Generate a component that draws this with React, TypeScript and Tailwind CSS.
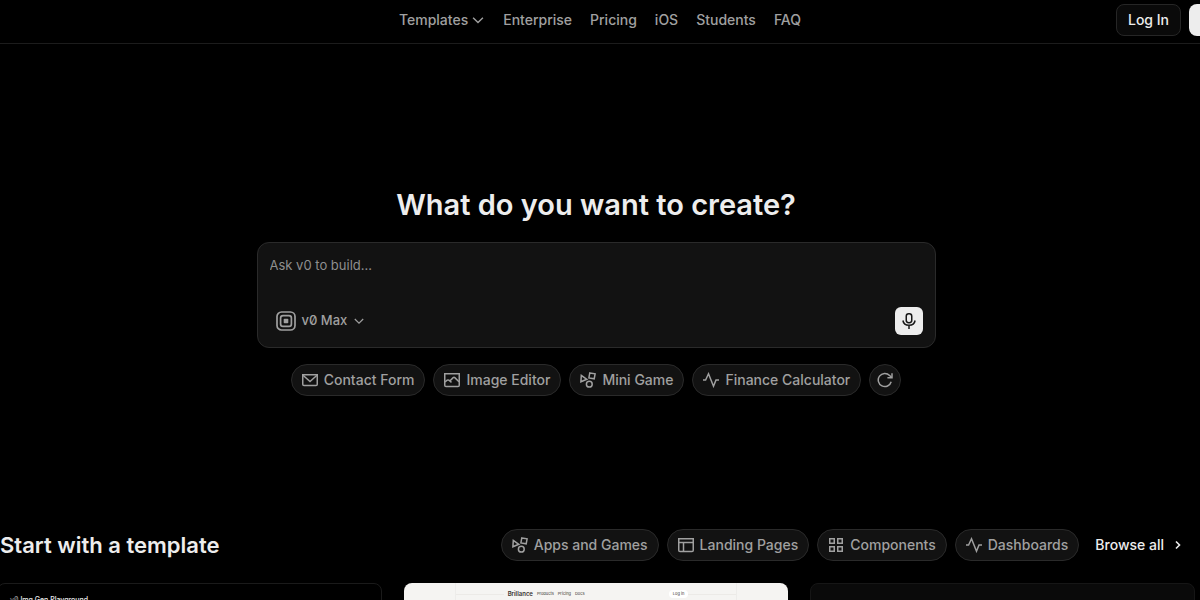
import React, { useState } from 'react';

type IconProps = { className?: string };

const ChevronDownIcon: React.FC<IconProps> = ({ className }) => (
    <svg viewBox="0 0 12 12" fill="none" stroke="currentColor" strokeWidth="1.2" className={className} aria-hidden="true">
        <path d="M1.8 4 6 8.2 10.2 4" />
    </svg>
);

const ChevronRightIcon: React.FC<IconProps> = ({ className }) => (
    <svg viewBox="0 0 12 12" fill="none" stroke="currentColor" strokeWidth="1.6" className={className} aria-hidden="true">
        <path d="M4 2.500 7.500 6 4 9.500" />
    </svg>
);

const ModelIcon: React.FC<IconProps> = ({ className }) => (
    <svg viewBox="0 0 20 20" fill="none" stroke="currentColor" strokeWidth="1.7" className={className} aria-hidden="true">
        <rect x="1" y="1" width="18" height="18" rx="4.5" />
        <rect x="4.6" y="4.6" width="10.8" height="10.8" rx="2.4" />
        <rect x="7.7" y="7.7" width="4.6" height="4.6" rx="0.8" fill="currentColor" stroke="none" />
    </svg>
);

const MicIcon: React.FC<IconProps> = ({ className }) => (
    <svg viewBox="0 0 16 16" fill="none" stroke="currentColor" strokeWidth="1.5" className={className} aria-hidden="true">
        <rect x="5.25" y="0.75" width="5.5" height="9" rx="2.4" />
        <path d="M1.9 7.5c.5 2.9 3 4.8 6.1 4.8s5.6-1.9 6.1-4.8M8 12.3V16" />
    </svg>
);

const MailIcon: React.FC<IconProps> = ({ className }) => (
    <svg viewBox="0 0 16 16" fill="none" stroke="currentColor" strokeWidth="1.5" className={className} aria-hidden="true">
        <path d="M.75 2.75h14.5v9.5a1.25 1.25 0 0 1-1.25 1.25H2a1.25 1.25 0 0 1-1.25-1.25z" />
        <path d="M1 3.2 8 9.5l7-6.3" />
    </svg>
);

const ImageIcon: React.FC<IconProps> = ({ className }) => (
    <svg viewBox="0 0 16 16" fill="none" stroke="currentColor" strokeWidth="1.5" className={className} aria-hidden="true">
        <path d="M.75 1.75h14.5v11.5a1.25 1.25 0 0 1-1.25 1.25H2a1.25 1.25 0 0 1-1.25-1.25z" />
        <path d="M1 10 3.2 8.2Q4 7.6 4.800 8.200L7.500 10.300M5.800 9 9.200 5.600Q10 4.900 10.800 5.600L15 9.800" />
    </svg>
);

const ShapesIcon: React.FC<IconProps> = ({ className }) => (
    <svg viewBox="0 0 16 16" fill="none" stroke="currentColor" strokeWidth="1.5" className={className} aria-hidden="true">
        <path d="M1.3 3.4 6.8 7.300 .9 9.800z" />
        <path d="M9.800 .9l5.300 .9-.9 5-5.300-.9z" />
        <circle cx="9.3" cy="12.2" r="2.9" />
    </svg>
);

const PulseIcon: React.FC<IconProps> = ({ className }) => (
    <svg viewBox="0 0 16 16" fill="none" stroke="currentColor" strokeWidth="1.5" className={className} aria-hidden="true">
        <path d="M0 8h2.6L5.5 1.8 10.5 14.2 13 8H16" />
    </svg>
);

const RefreshIcon: React.FC<IconProps> = ({ className }) => (
    <svg viewBox="0 0 16 16" fill="none" stroke="currentColor" strokeWidth="1.5" className={className} aria-hidden="true">
        <path d="M14.2 9.8A6.6 6.6 0 1 1 12.6 3.4L14.7 5.5" />
        <path d="M15 1.2V5.75H10.4" />
    </svg>
);

const LayoutIcon: React.FC<IconProps> = ({ className }) => (
    <svg viewBox="0 0 16 16" fill="none" stroke="currentColor" strokeWidth="1.5" className={className} aria-hidden="true">
        <path d="M.75 1.75h14.5v11.5a1.25 1.25 0 0 1-1.25 1.25H2a1.25 1.25 0 0 1-1.25-1.25zM.75 5.5h14.5M5.5 5.5v9" />
    </svg>
);

const GridIcon: React.FC<IconProps> = ({ className }) => (
    <svg viewBox="0 0 16 16" fill="none" stroke="currentColor" strokeWidth="1.5" className={className} aria-hidden="true">
        <path d="M1.75 1.75h4.5v4.5h-4.5zM9.75 1.75h4.5v4.5h-4.5zM1.75 9.75h4.5v4.5h-4.5zM9.75 9.75h4.5v4.5h-4.5z" />
    </svg>
);

const NAV_LINKS = ['Enterprise', 'Pricing', 'iOS', 'Students', 'FAQ'];

const SUGGESTIONS = [
    { label: 'Contact Form', Icon: MailIcon },
    { label: 'Image Editor', Icon: ImageIcon },
    { label: 'Mini Game', Icon: ShapesIcon },
    { label: 'Finance Calculator', Icon: PulseIcon },
];

const CATEGORIES = [
    { label: 'Apps and Games', Icon: ShapesIcon },
    { label: 'Landing Pages', Icon: LayoutIcon },
    { label: 'Components', Icon: GridIcon },
    { label: 'Dashboards', Icon: PulseIcon },
];

const Pill: React.FC<{ label: string; Icon: React.FC<IconProps>; onClick?: () => void }> = ({ label, Icon, onClick }) => (
    <button
        type="button"
        onClick={onClick}
        className="flex h-8 items-center gap-1.5 whitespace-nowrap rounded-full border border-[#2a2a2a] bg-[#121212] px-2.5 text-sm font-medium text-[#a0a0a0]"
    >
        <Icon className="size-4 shrink-0" />
        {label}
    </button>
);

const Header: React.FC = () => (
    <header className="grid grid-cols-[1fr_auto_1fr] items-center overflow-hidden border-b border-[#1c1c1c] pt-1 pb-[7px]">
        <div />
        <nav className="flex items-center gap-[18px] text-sm font-medium text-[#a0a0a0]">
            <button type="button" className="flex items-center gap-[3px]">
                Templates
                <ChevronDownIcon className="size-3.5" />
            </button>
            {NAV_LINKS.map((link) => (
                <a key={link} href="#">{link}</a>
            ))}
        </nav>
        <div className="-mr-14 flex justify-end gap-2">
            <button type="button" className="h-8 rounded-lg border border-[#262626] bg-[#0a0a0a] px-[11px] text-sm font-medium text-[#ededed]">
                Log In
            </button>
            <button type="button" aria-label="Sign Up" className="h-8 w-[67px] rounded-lg bg-[#ededed]" />
        </div>
    </header>
);

const PromptBox: React.FC<{ value: string; onChange: (value: string) => void }> = ({ value, onChange }) => (
    <form
        onSubmit={(e) => e.preventDefault()}
        className="flex w-full max-w-[679px] flex-col rounded-xl border border-[#2a2a2a] bg-[#121212] p-3"
    >
        <textarea
            aria-label="Prompt"
            placeholder="Ask v0 to build…"
            value={value}
            onChange={(e) => onChange(e.target.value)}
            className="h-[52px] w-full resize-none bg-transparent text-[13px] leading-5 text-[#ededed] outline-none placeholder:text-[#8f8f8f]"
        />
        <div className="flex items-center justify-between">
            <button type="button" className="flex items-center gap-1.5 px-1.5 text-[13px] font-medium slashed-zero text-[#a0a0a0]">
                <ModelIcon className="size-5" />
                v0 Max
                <ChevronDownIcon className="size-3" />
            </button>
            <button type="button" aria-label="Voice input" className="flex size-7 items-center justify-center rounded-md bg-[#ededed] text-[#171717]">
                <MicIcon className="size-4" />
            </button>
        </div>
    </form>
);

const TemplateCards: React.FC = () => (
    <div className="-mx-[3px] mt-[22px] grid grid-cols-3 gap-[22px]">
        <article className="h-60 rounded-lg border border-[#1a1a1a] bg-black px-3 pt-2.5">
            <p className="text-[7px] leading-3 font-medium slashed-zero text-[#ededed]">
                <span className="text-[#8f8f8f]">v0</span> Img Gen Playground
            </p>
        </article>
        <article className="h-60 rounded-lg bg-[#f5f4f2] px-[51px]">
            <div className="flex h-full items-start border-x border-[#edecea] pt-[7px]">
                <div className="mt-1 w-12 border-t border-[#eceae7]" />
                <div className="flex flex-1 items-center gap-1 pl-1 text-[4px] leading-2 text-[#37322f]">
                    <span className="text-[6px] font-semibold">Brillance</span>
                    <span>Products</span>
                    <span>Pricing</span>
                    <span>Docs</span>
                    <span className="ml-auto rounded-full bg-white px-1">Log in</span>
                </div>
                <div className="mt-1 w-12 border-t border-[#eceae7]" />
            </div>
        </article>
        <article className="h-60 rounded-lg border border-[#161616] bg-[#0a0a0a]" />
    </div>
);

const App: React.FC = () => {
    const [prompt, setPrompt] = useState('');

    return (
        <div className="h-screen overflow-hidden bg-black font-['Inter',sans-serif] text-[#ededed]">
            <Header />
            <main className="pr-2">
                <section className="flex flex-col items-center pt-[141px]">
                    <h1 className="text-[29px] leading-10 font-semibold">What do you want to create?</h1>
                    <div className="mt-[17px] flex w-full justify-center">
                        <PromptBox value={prompt} onChange={setPrompt} />
                    </div>
                    <div className="mt-4 flex items-center gap-2">
                        {SUGGESTIONS.map(({ label, Icon }) => (
                            <Pill key={label} label={label} Icon={Icon} onClick={() => setPrompt(label)} />
                        ))}
                        <button
                            type="button"
                            aria-label="Refresh suggestions"
                            className="flex size-8 items-center justify-center rounded-full border border-[#2a2a2a] bg-[#121212] text-[#a0a0a0]"
                        >
                            <RefreshIcon className="size-4" />
                        </button>
                    </div>
                </section>

                <section className="mt-[133px]">
                    <div className="flex items-center justify-between">
                        <h2 className="text-[22px] leading-8 font-semibold">Start with a template</h2>
                        <div className="flex items-center gap-2">
                            {CATEGORIES.map(({ label, Icon }) => (
                                <Pill key={label} label={label} Icon={Icon} />
                            ))}
                            <a href="#" className="flex items-center gap-2 px-2 text-sm font-medium">
                                Browse all
                                <ChevronRightIcon className="size-3" />
                            </a>
                        </div>
                    </div>
                    <TemplateCards />
                </section>
            </main>
        </div>
    );
};

export default App;
